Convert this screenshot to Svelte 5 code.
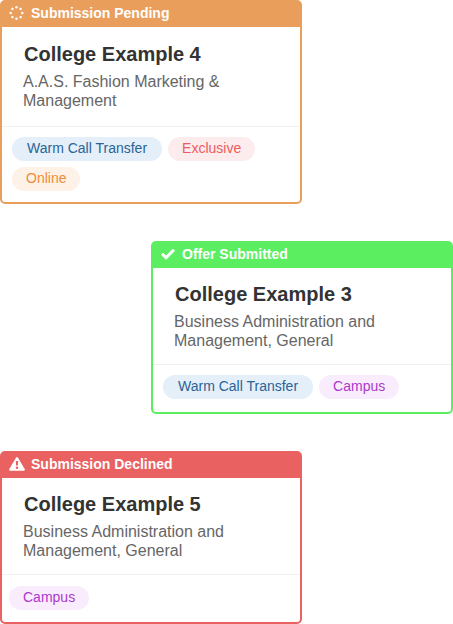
<script>
  const offers = [
    {
      status: 'pending',
      label: 'Submission Pending',
      college: 'College Example 4',
      program: 'A.A.S. Fashion Marketing & Management',
      tags: [
        ['transfer', 'Warm Call Transfer'],
        ['exclusive', 'Exclusive'],
        ['online', 'Online'],
      ],
    },
    {
      status: 'submitted',
      label: 'Offer Submitted',
      college: 'College Example 3',
      program: 'Business Administration and Management, General',
      tags: [
        ['transfer', 'Warm Call Transfer'],
        ['campus', 'Campus'],
      ],
    },
    {
      status: 'declined',
      label: 'Submission Declined',
      college: 'College Example 5',
      program: 'Business Administration and Management, General',
      tags: [['campus', 'Campus']],
    },
  ];

  const dots = [0, 45, 90, 135, 180, 225, 270, 315];
</script>

<main>
  {#each offers as offer}
    <article class={offer.status}>
      <header>
        <svg viewBox="0 0 16 16" aria-hidden="true">
          {#if offer.status === 'pending'}
            {#each dots as angle}
              <circle cx="7.5" cy="2.2" r="1.25" transform="rotate({angle} 7.5 8)" />
            {/each}
          {:else if offer.status === 'submitted'}
            <path d="M1.3 8.8 3 7 6.1 10 12.9 3 14.6 4.8 6.1 13.4Z" stroke-width="0.8" stroke="currentColor" stroke-linejoin="round" />
          {:else}
            <path
              fill-rule="evenodd"
              d="M7 1.7Q8 .5 9 1.7L15.7 13Q16.2 14.5 14.8 14.7H1.2Q-.2 14.5.3 13ZM6.8 5 7.1 9.6H8.9L9.2 5ZM8 10.4A1.3 1.3 0 1 0 8 13A1.3 1.3 0 1 0 8 10.4Z"
            />
          {/if}
        </svg>
        <span>{offer.label}</span>
      </header>
      <div class="details">
        <h2>{offer.college}</h2>
        <p>{offer.program}</p>
      </div>
      <ul>
        {#each offer.tags as [kind, text]}
          <li class={kind}>{text}</li>
        {/each}
      </ul>
    </article>
  {/each}
</main>

<style>
  :global(body) {
    margin: 0;
    background: #fff;
  }

  main {
    display: flex;
    flex-direction: column;
    gap: 37px;
    font-family: 'Liberation Sans', Arial, sans-serif;
  }

  article {
    --accent: #ea9e5c;
    box-sizing: border-box;
    width: calc(100% * 2 / 3);
    border: 2px solid var(--accent);
    border-radius: 5px;
    background: #fff;
  }

  .submitted {
    --accent: #5cee61;
    align-self: flex-end;
  }

  .declined {
    --accent: #e96161;
  }

  header {
    display: flex;
    align-items: center;
    gap: 6px;
    height: 25px;
    padding: 0 7px 3px;
    box-sizing: border-box;
    background: var(--accent);
    color: #fff;
    font-size: 14px;
    line-height: 16px;
    font-weight: bold;
  }

  svg {
    width: 16px;
    height: 16px;
    fill: currentColor;
  }

  .details {
    padding: 14px 21px;
    border-bottom: 1px solid #f1f1f1;
  }

  .pending .details {
    padding: 15px 21px 16px;
  }

  h2 {
    margin: 0 0 6px 1px;
    color: #333;
    font-size: 20px;
    line-height: 24px;
  }

  p {
    max-width: 220px;
    margin: 0;
    color: #666;
    font-size: 16px;
    line-height: 19px;
  }

  ul {
    display: flex;
    flex-wrap: wrap;
    gap: 6px;
    margin: 0;
    padding: 10px 10px 11px;
    list-style: none;
  }

  .declined ul {
    padding: 11px 7px 12px;
  }

  .submitted ul {
    padding-bottom: 13px;
  }

  li {
    box-sizing: border-box;
    height: 24px;
    padding: 0 14px;
    border-radius: 12px;
    font-size: 14px;
    line-height: 23px;
  }

  .transfer {
    padding: 0 15px;
    background: #e4effa;
    color: #2a6496;
  }

  .exclusive {
    background: #fdeced;
    color: #ec5c60;
  }

  .online {
    background: #fef1e8;
    color: #f08c35;
  }

  .campus {
    background: #f9edfd;
    color: #ab38cc;
  }
</style>
